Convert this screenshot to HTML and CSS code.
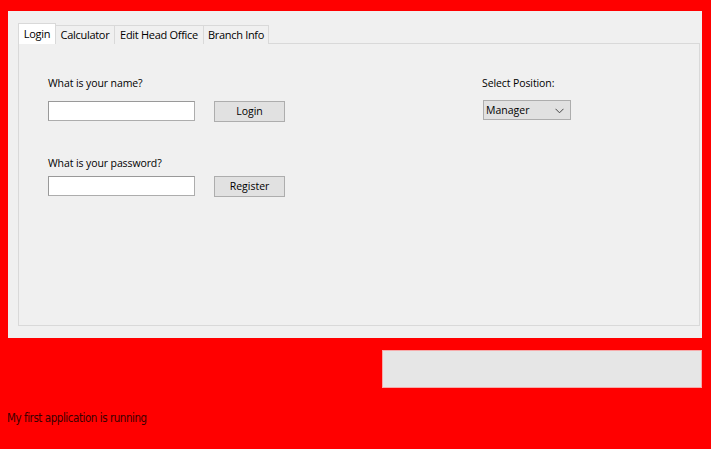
FILE: index.html
```html
<!DOCTYPE html>
<html>
<head>
<meta charset="utf-8">
<link rel="stylesheet" href="styles.css">
</head>
<body>
<div class="window">
  <div class="tabs">
    <div class="tab selected tab-login">Login</div>
    <div class="tab tab-calc">Calculator</div>
    <div class="tab tab-edit">Edit Head Office</div>
    <div class="tab tab-branch">Branch Info</div>
  </div>
  <div class="pane">
    <div class="left">
      <div class="label">What is your name?</div>
      <div class="row">
        <div class="input"></div>
        <div class="button">Login</div>
      </div>
      <div class="label label2">What is your password?</div>
      <div class="row row2">
        <div class="input"></div>
        <div class="button">Register</div>
      </div>
    </div>
    <div class="right">
      <div class="label">Select Position:</div>
      <div class="combo">
        <span>Manager</span>
        <svg class="chev" width="9" height="6" viewBox="0 0 9 6"><path d="M0.5 0.8 L4.5 4.8 L8.5 0.8" fill="none" stroke="#444" stroke-width="1"/></svg>
      </div>
    </div>
  </div>
</div>
<div class="status-box"></div>
<div class="message">My first application is running</div>
</body>
</html>
```
FILE: styles.css
```css
html, body {
  margin: 0;
  padding: 0;
  background: #ff0000;
  width: 711px;
  height: 449px;
  overflow: hidden;
  font-family: "Open Sans", "Noto Sans", sans-serif;
}
.window {
  margin: 11px 9px 0 8px;
  background: #f0f0f0;
  padding: 12px 2px 11px 10px;
  height: 304px;
}
.tabs {
  display: flex;
  align-items: flex-end;
  height: 21px;
  position: relative;
  z-index: 1;
  margin-bottom: -1px;
}
.tab {
  box-sizing: border-box;
  height: 19px;
  border: 1px solid #d9d9d9;
  border-bottom: none;
  border-left: none;
  background: #f0f0f0;
  font-size: 11px;
  letter-spacing: -0.3px;
  line-height: 18px;
  color: #000;
  text-align: center;
  white-space: nowrap;
}
.tab.selected {
  height: 21px;
  line-height: 19px;
  background: #fff;
  border-left: 1px solid #d9d9d9;
}
.tab-login { width: 38px; }
.tab-calc { width: 59px; }
.tab-edit { width: 89px; }
.tab-branch { width: 65px; }
.pane {
  border: 1px solid #d9d9d9;
  background: #f0f0f0;
  height: 281px;
  display: flex;
  padding: 0 0 0 29px;
}
.left {
  width: 434px;
  padding-top: 31px;
}
.right {
  padding-top: 31px;
}
.label {
  font-size: 10.5px;
  letter-spacing: -0.1px;
  line-height: 16px;
  height: 16px;
  color: #000;
}
.row {
  display: flex;
  margin-top: 10px;
  gap: 19px;
}
.label2 {
  margin-top: 33px;
}
.row2 {
  margin-top: 5px;
}
.input {
  width: 145px;
  height: 18px;
  background: #fff;
  border: 1px solid #7a7a7a;
  border-color: #999 #adadad #adadad #999;
}
.button {
  width: 69px;
  height: 19px;
  background: #e1e1e1;
  border: 1px solid #adadad;
  font-size: 10.5px;
  line-height: 19px;
  text-align: center;
  color: #000;
}
.combo {
  margin-top: 9px;
  margin-left: 1px;
  height: 18px;
  background: #e1e1e1;
  border: 1px solid #adadad;
  display: flex;
  align-items: center;
  justify-content: space-between;
  padding: 0 6px 0 2px;
  width: 78px;
  font-size: 10.5px;
}
.chev {
  display: block;
  margin-top: 2px;
}
.status-box {
  margin: 12px 9px 0 382px;
  height: 36px;
  background: #e6e6e6;
  border: 1px solid #f7aaaa;
}
.message {
  margin: 23px 0 0 7px;
  font-family: "DejaVu Sans Condensed", "Liberation Sans", sans-serif;
  font-size: 11.5px;
  letter-spacing: -0.45px;
  line-height: 14px;
  color: #3a0000;
}
```
